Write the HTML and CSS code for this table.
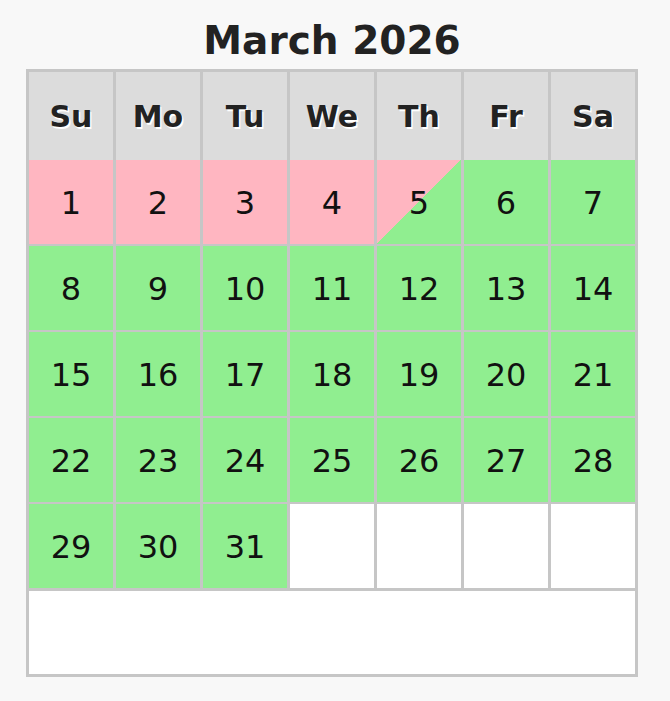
FILE: index.html
```html
<!DOCTYPE html>
<html lang="en">
<head>
<meta charset="utf-8">
<title>March 2026</title>
<link rel="stylesheet" href="styles.css">
</head>
<body>
<div class="wrap">
  <h1 class="title">March 2026</h1>
  <div class="calendar">
    <div class="week-head">
      <div class="wd">Su</div><div class="wd">Mo</div><div class="wd">Tu</div><div class="wd">We</div><div class="wd">Th</div><div class="wd">Fr</div><div class="wd">Sa</div>
    </div>
    <div class="days">
      <div class="day busy">1</div><div class="day busy">2</div><div class="day busy">3</div><div class="day busy">4</div><div class="day split">5</div><div class="day free">6</div><div class="day free">7</div>
      <div class="day free">8</div><div class="day free">9</div><div class="day free">10</div><div class="day free">11</div><div class="day free">12</div><div class="day free">13</div><div class="day free">14</div>
      <div class="day free">15</div><div class="day free">16</div><div class="day free">17</div><div class="day free">18</div><div class="day free">19</div><div class="day free">20</div><div class="day free">21</div>
      <div class="day free">22</div><div class="day free">23</div><div class="day free">24</div><div class="day free">25</div><div class="day free">26</div><div class="day free">27</div><div class="day free">28</div>
      <div class="day free">29</div><div class="day free">30</div><div class="day free">31</div><div class="day empty"></div><div class="day empty"></div><div class="day empty"></div><div class="day empty"></div>
    </div>
    <div class="footer"></div>
  </div>
</div>
</body>
</html>
```
FILE: styles.css
```css
html, body {
  margin: 0;
  padding: 0;
  background: #f8f8f8;
  font-family: "DejaVu Sans", Verdana, sans-serif;
}
.wrap {
  width: 612px;
  padding-left: 26px;
}
.title {
  margin: 0 0 4px 0;
  padding-top: 17px;
  height: 48px;
  line-height: 48px;
  font-size: 39px;
  font-weight: bold;
  color: #222;
  text-align: center;
}
.calendar {
  border: 3px solid #c6c6c6;
  background: #c6c6c6;
}
.week-head {
  display: grid;
  grid-template-columns: repeat(7, 84px);
  column-gap: 3px;
}
.wd {
  height: 88px;
  background: #dcdcdc;
  display: flex;
  align-items: center;
  justify-content: center;
  font-size: 30px;
  font-weight: bold;
  color: #222;
  text-shadow: 1.5px 1.5px 0 #fff;
}
.days {
  display: grid;
  grid-template-columns: repeat(7, 84px);
  grid-auto-rows: 84px;
  column-gap: 3px;
  row-gap: 2px;
}
.day {
  display: flex;
  align-items: center;
  justify-content: center;
  font-size: 32px;
  color: #111;
  padding-top: 2px;
  box-sizing: border-box;
}
.busy { background: #ffb6c1; }
.free { background: #90ee90; }
.split { background: linear-gradient(to bottom right, #ffb6c1 50%, #90ee90 50%); }
.empty { background: #fff; }
.footer {
  margin-top: 3px;
  height: 83px;
  background: #fff;
}
```
